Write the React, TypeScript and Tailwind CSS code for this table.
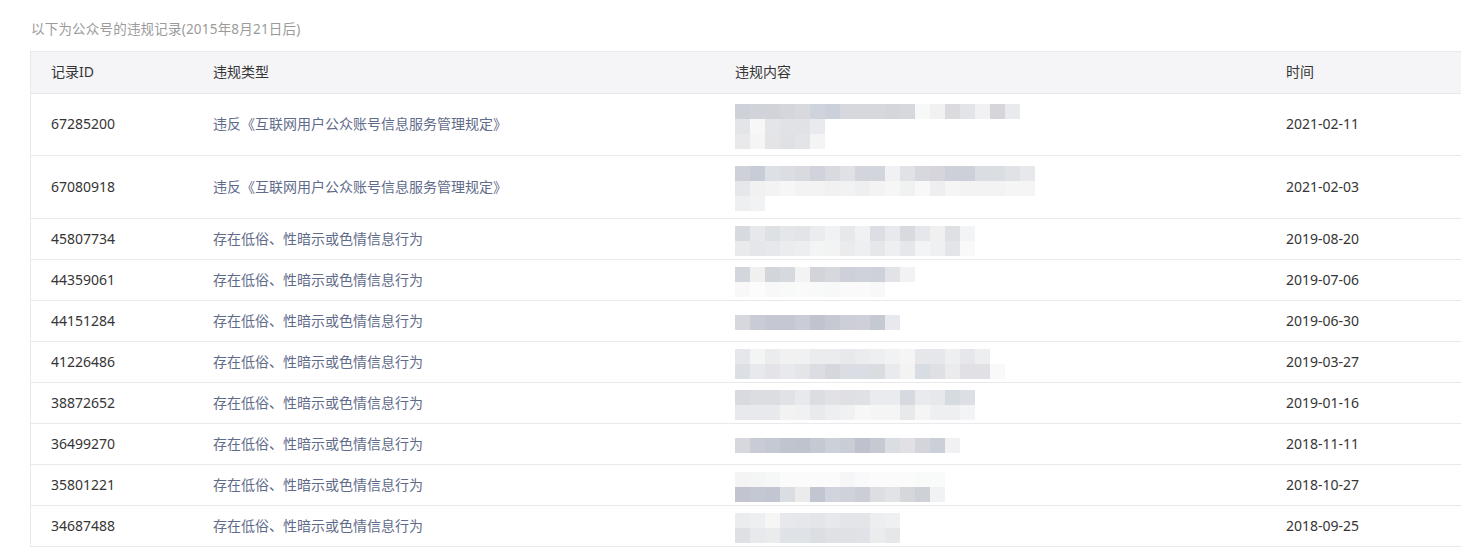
import React from "react";

type Row = {
  id: string;
  type: string;
  time: string;
  h: string;
  mosaic: string[][];
};

const A = "违反《互联网用户公众账号信息服务管理规定》";
const B = "存在低俗、性暗示或色情信息行为";

const rows: Row[] = [
  {
    id: "67285200",
    type: A,
    time: "2021-02-11",
    h: "h-[62px]",
    mosaic: [
      ["cfd1d8", "d0d3da", "d2d3d9", "d3d6db", "d8d9de", "cfd3dc", "ccd0da", "d6d8de", "d6d8de", "d6d8de", "d4d6dc", "d6d8de", "f7f8f8", "f1f1f2", "dadadf", "e3e4e8", "f1f1f3", "d6d5db", "e9eaed"],
      ["e3e5e8", "f7f7f7", "e4e5e8", "e0e2e6", "e0e2e6", "e9eaed"],
      ["e9e9ec", "f5f5f6", "e4e4e7", "e0e1e5", "e3e4e7", "f4f4f5"],
    ],
  },
  {
    id: "67080918",
    type: A,
    time: "2021-02-03",
    h: "h-[63px]",
    mosaic: [
      ["cfd1d9", "c8ccd6", "dde0e4", "dadde2", "d8dae0", "d0d3db", "d8dae0", "e0e1e5", "d3d5dc", "d3d5dc", "f1f1f3", "e1e2e5", "d6d8dd", "d6d5dc", "cdd0d9", "cdd0d9", "dadde2", "dadde2", "e0e2e6", "e6e8eb"],
      ["e6e7ea", "f1f1f2", "f3f3f3", "f6f6f6", "f3f3f4", "f3f3f4", "f1f1f2", "f1f2f3", "eeeff1", "f3f3f4", "f6f6f6", "f0f1f1", "f8f8f8", "eeeef0", "f5f5f5", "f3f3f4", "f3f3f4", "f3f3f4", "f5f5f5", "f5f5f5"],
      ["eeeff1", "f1f2f3"],
    ],
  },
  {
    id: "45807734",
    type: B,
    time: "2019-08-20",
    h: "h-[41px]",
    mosaic: [
      ["d7dbe0", "e6e8eb", "dde1e4", "e4e6e9", "e2e4e8", "ebecef", "f1f2f4", "e6e8eb", "f0f1f2", "dcdee3", "e8e9ec", "d9dae0", "e6e7eb", "f0f0f0", "dfe0e4", "f3f4f6"],
      ["e9eaec", "e4e6e9", "e6e8eb", "ebecee", "eceef0", "f3f4f4", "f3f3f3", "e9ebed", "eeeff1", "e5e7ea", "eeeff1", "e5e7ea", "f3f4f5", "eff0f1", "e4e5e8", "f9f9f9"],
    ],
  },
  {
    id: "44359061",
    type: B,
    time: "2019-07-06",
    h: "h-[41px]",
    mosaic: [
      ["d3d6dc", "f0f0f0", "d2d6db", "d6d9de", "f3f3f3", "d2d4da", "d6d8de", "cdd0d9", "cfd2da", "cdd1d9", "e2e3e7", "f2f2f4"],
      ["f8f8f8", "fcfcfc", "f8f8f8", "f8f9f9", "fafafa", "f8f9f9", "f7f8f8", "fafafa", "fafafa", "f8f8f8"],
    ],
  },
  {
    id: "44151284",
    type: B,
    time: "2019-06-30",
    h: "h-[41px]",
    mosaic: [
      ["d6d8dd", "c9ccd5", "c5c8d2", "c5c8d2", "cacdd5", "c1c4ce", "c6c9d2", "cccfd8", "cecfd7", "c5c9d2", "e8e9ee"],
    ],
  },
  {
    id: "41226486",
    type: B,
    time: "2019-03-27",
    h: "h-[41px]",
    mosaic: [
      ["e6e7eb", "f3f4f4", "ebecee", "f1f1f2", "f0f1f2", "ebecee", "ebecee", "e8e9ec", "ebecee", "eeeff1", "f1f2f3", "f5f5f5", "e6e7ea", "e6e7ea", "eeeff1", "e6e7ea", "edeef0"],
      ["dcdfe3", "e8e9ec", "e4e4e8", "e8e9ec", "e4e5e7", "dcdde2", "d6d7dc", "dadde3", "dadde3", "dadde0", "e9eaed", "f3f3f3", "d8dce3", "dfe0e4", "ebebee", "e1e1e5", "e1e1e5", "f9f9f9"],
    ],
  },
  {
    id: "38872652",
    type: B,
    time: "2019-01-16",
    h: "h-[41px]",
    mosaic: [
      ["d9dadf", "dcdde1", "dcdde1", "e1e2e5", "e8e9ec", "dcdde2", "e2e2e6", "dfe0e4", "e0e1e5", "eaebee", "eaebee", "d6d9df", "e9eaed", "e7e8eb", "d6dae1", "dcdfe3"],
      ["e8e9ec", "e8e9ec", "e8e9ec", "f2f2f3", "f0f1f2", "e9eaed", "eeeff1", "f0f1f2", "f7f7f7", "f5f5f5", "f5f5f5", "e8e9ea", "f5f5f5", "eeeff1", "eeeff1", "f3f4f5"],
    ],
  },
  {
    id: "36499270",
    type: B,
    time: "2018-11-11",
    h: "h-[41px]",
    mosaic: [
      ["d7d8dd", "c9ccd5", "c5c9d4", "c0c4cf", "bfc3ce", "c5c9d2", "ccd0d8", "c9cdd5", "bfc2ce", "c5c9d2", "dadde1", "e1e1e5", "d4d5da", "cbcfd7", "f1f1f3"],
    ],
  },
  {
    id: "35801221",
    type: B,
    time: "2018-10-27",
    h: "h-[41px]",
    mosaic: [
      ["f4f4f4", "f4f5f5", "f6f7f7", "fbfbfb", "fbfbfb", "fbfbfb", "fbfbfb", "f6f6f6", "f8f9fa", "fbfbfb", "fbfbfb", "fbfbfb", "f9fafa", "f9fafa"],
      ["c2c4d0", "c4c8d2", "c1c6d2", "dadde2", "ebebec", "c2c6d0", "d1d4dc", "cfd2da", "cbced6", "dcdee2", "e1e3e6", "d6d7db", "cfd1d9", "f1f2f3"],
    ],
  },
  {
    id: "34687488",
    type: B,
    time: "2018-09-25",
    h: "h-[41px]",
    mosaic: [
      ["ebecee", "eeeff1", "f6f6f6", "e7e8eb", "e6e7ea", "e4e5e8", "e7e8eb", "e4e5e8", "e4e5e8", "edeef0", "eff0f1"],
      ["dfe0e4", "e8e9ec", "eaebec", "dfe2e6", "dfe2e6", "dbdee2", "e0e1e5", "e0e1e5", "dfe2e6", "ebecee", "e6e7e9"],
    ],
  },
];

function Mosaic({ lines }: { lines: string[][] }) {
  return (
    <div className="flex flex-col">
      {lines.map((line, i) => (
        <div key={i} className="flex h-[15px]">
          {line.map((c, j) => (
            <div key={j} className="h-[15px] w-[15px]" style={{ backgroundColor: "#" + c }} />
          ))}
        </div>
      ))}
    </div>
  );
}

export default function App() {
  return (
    <div
      className="min-h-[555px] w-[1461px] overflow-hidden bg-white"
      style={{ fontFamily: '"Noto Sans", "Noto Sans CJK SC", sans-serif' }}
    >
      <div className="flex h-[51px] items-center pl-[31px] pt-[8px] text-[13.5px] tracking-[0.2px] text-[#9b9b9b]">
        以下为公众号的违规记录(2015年8月21日后)
      </div>
      <div className="ml-[30px] border-l border-[#e9e9ec]">
        <div className="grid h-[43px] grid-cols-[162px_522px_551px_1fr] items-center border-y border-[#e9e9ec] bg-[#f5f5f7] pb-[2px] text-[14px] text-[#353535]">
          <div className="pl-[20px]">记录ID</div>
          <div className="pl-[20px]">违规类型</div>
          <div className="pl-[20px]">违规内容</div>
          <div className="pl-[20px]">时间</div>
        </div>
        {rows.map((r) => (
          <div
            key={r.id}
            className={`grid grid-cols-[162px_522px_551px_1fr] items-center border-b border-[#e9e9ec] text-[14px] ${r.h}`}
          >
            <div className="pb-[2px] pl-[20px] text-[#353535]">{r.id}</div>
            <div className="pb-[2px] pl-[20px] text-[#5f6b8a]">{r.type}</div>
            <div className="pl-[20px] pt-[3px]">
              <Mosaic lines={r.mosaic} />
            </div>
            <div className="pb-[2px] pl-[20px] text-[#353535]">{r.time}</div>
          </div>
        ))}
      </div>
    </div>
  );
}
